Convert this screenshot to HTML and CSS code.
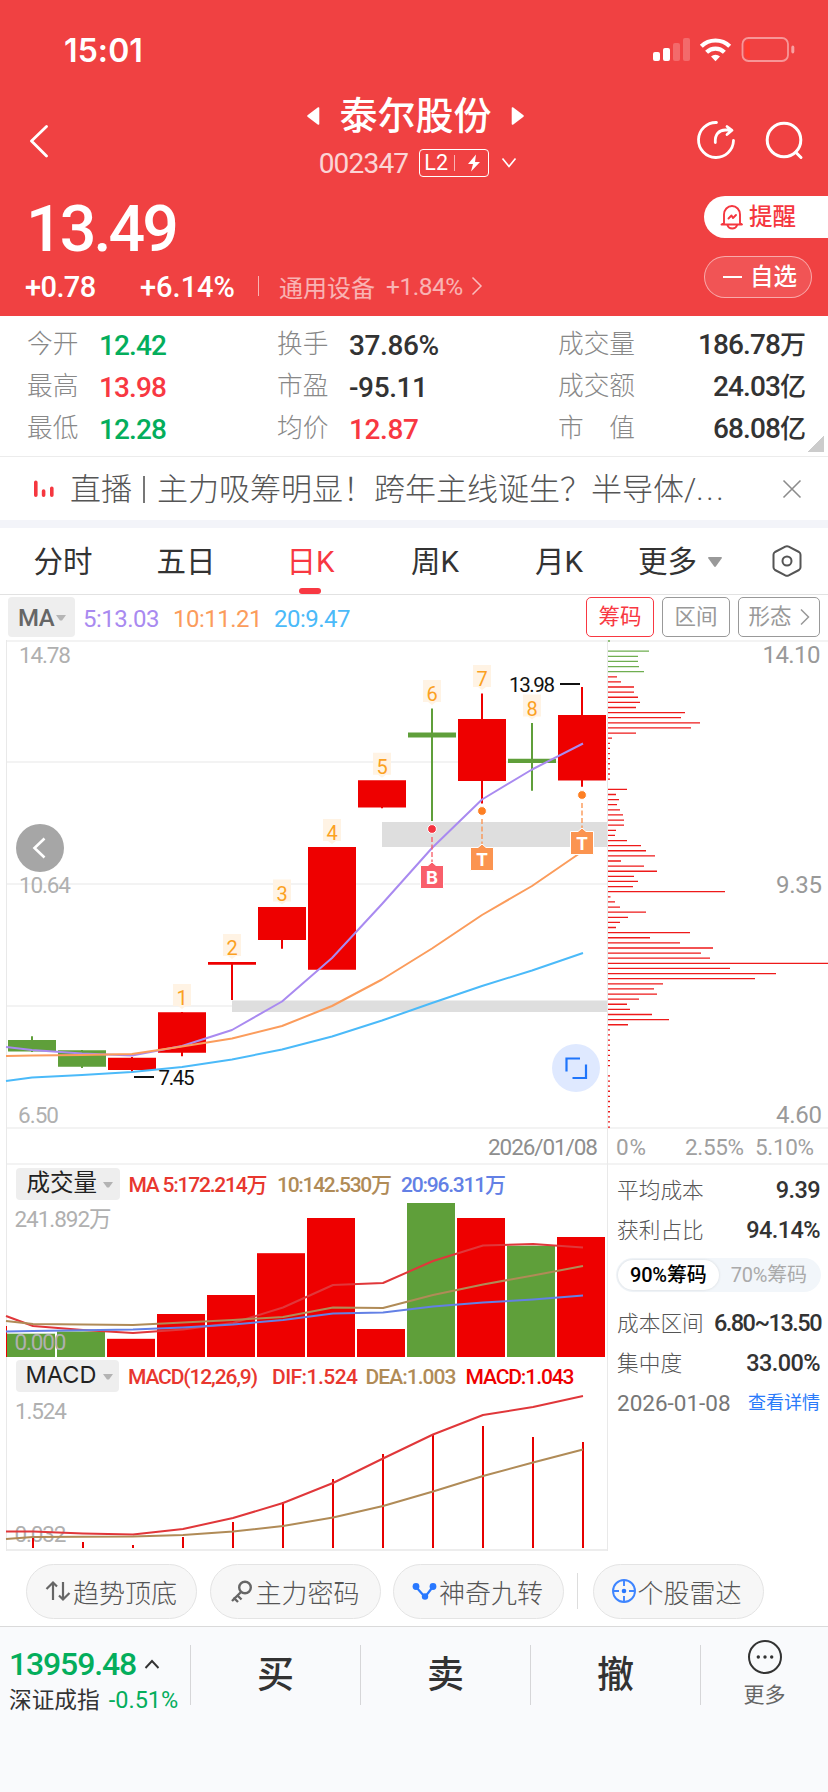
FILE: index.html
```html
<!DOCTYPE html>
<html lang="zh-CN">
<head>
<meta charset="utf-8">
<meta name="viewport" content="width=828">
<title>泰尔股份 002347</title>
<link rel="stylesheet" href="styles.css">
</head>
<body>
<div class="app">
  <header class="header">
    <div class="status">
      <span class="clock">15:01</span>
      <svg class="status-icons" width="142" height="26" viewBox="653 37 142 26">
        <g fill="#fff">
          <rect x="653" y="52" width="7" height="9" rx="2"/><rect x="663" y="48" width="7" height="13" rx="2"/>
          <rect x="673" y="43" width="7" height="18" rx="2" opacity=".22"/><rect x="683" y="38" width="7" height="23" rx="2" opacity=".22"/>
          <rect x="791.3" y="45.5" width="3" height="8" rx="2" opacity=".5"/>
          <path d="M711 56.6a6.4 6.4 0 0 1 9 0l-4.500 4.700z"/>
        </g>
        <g fill="none" stroke="#fff" stroke-width="4.200">
          <path d="M701.300 46.300a20.300 20.300 0 0 1 28.400 0M706.600 52.300a12.600 12.600 0 0 1 17.800 0"/>
        </g>
        <rect x="742.500" y="38" width="45.500" height="23" rx="6" fill="none" stroke="#fff" stroke-width="1.800" opacity=".45"/>
        <path d="M750 41v17h-2a3 3 0 0 1-3-3V44a3 3 0 0 1 3-3z" fill="#ff3b30"/>
      </svg>
    </div>

    <div class="nav">
      <svg class="back" width="18" height="34" viewBox="30 124 18 34"><path d="M46.500 126.500 31.500 141l15 15" fill="none" stroke="#fff" stroke-width="2.800" stroke-linecap="round" stroke-linejoin="round"/></svg>
      <div class="title">
        <div class="title-row">
          <svg width="13" height="20" viewBox="0 0 13 20"><path d="M11.500 2v16L1 10z" fill="#fff" stroke="#fff" stroke-width="1.600" stroke-linejoin="round"/></svg>
          <h1>泰尔股份</h1>
          <svg width="13" height="20" viewBox="0 0 13 20"><path d="M1.500 2v16L12 10z" fill="#fff" stroke="#fff" stroke-width="1.600" stroke-linejoin="round"/></svg>
        </div>
        <div class="code-row">
          <span class="code">002347</span>
          <span class="level"><b>L2</b><i></i><svg width="14" height="18" viewBox="0 0 14 18"><path d="M9 .5 1 10h5l-2 7.500L13 8H8z" fill="#fff"/></svg></span>
          <svg width="16" height="12" viewBox="0 0 16 12"><path d="m1.500 1.500 6.500 8 6.500-8" fill="none" stroke="#fff" stroke-width="1.700"/></svg>
        </div>
      </div>
      <div class="nav-actions">
        <svg width="40" height="40" viewBox="696 120 40 40" fill="none" stroke="#fff" stroke-width="2.800" stroke-linecap="round" stroke-linejoin="round"><path d="M716.500 122.500A17.500 17.500 0 1 0 733.500 140.500M715.300 142.500c-.6-8 3.700-12.500 10-12.500h6M727 126.500l5 3.800-5 4.200"/></svg>
        <svg width="40" height="40" viewBox="764 120 40 40" fill="none" stroke="#fff" stroke-width="3" stroke-linecap="round"><circle cx="784" cy="140" r="16.800"/><path d="m796.500 153 4.500 4.500"/></svg>
      </div>
    </div>

    <div class="quote">
      <div class="quote-main">
        <div class="price">13.49</div>
        <div class="changes">
          <span class="chg">+0.78</span><span class="chg pct">+6.14%</span><i class="bar"></i>
          <span class="industry">通用设备</span><span class="industry-pct">+1.84%</span>
          <svg width="12" height="20" viewBox="0 0 12 20"><path d="m1.500 1.500 8.500 8.500-8.500 8.500" fill="none" stroke="#fff" stroke-width="1.500" opacity=".65"/></svg>
        </div>
      </div>
      <div class="quote-actions">
        <button class="remind"><svg width="25" height="26" viewBox="719 203 25 26" fill="none" stroke="#f5373f" stroke-width="1.900" stroke-linejoin="round" stroke-linecap="round"><path d="M724 222v-8.500a8 8.500 0 0 1 16 0V222l2 1.500h-20.500zM727.500 224.500c1.500 4 8 4 9.500 0M728.500 217.500l3-3 1.500 2.500 3-3"/></svg>提醒</button>
        <button class="watch"><i></i>自选</button>
      </div>
    </div>
  </header>

  <section class="stats">
    <dl class="c1"><dt>今开</dt><dd class="down">12.42</dd><dt>最高</dt><dd class="up">13.98</dd><dt>最低</dt><dd class="down">12.28</dd></dl>
    <dl class="c2"><dt>换手</dt><dd>37.86%</dd><dt>市盈</dt><dd>-95.11</dd><dt>均价</dt><dd class="up">12.87</dd></dl>
    <dl class="c3"><dt>成交量</dt><dd>186.78<em>万</em></dd><dt>成交额</dt><dd>24.03<em>亿</em></dd><dt>市　值</dt><dd>68.08<em>亿</em></dd></dl>
    <i class="corner"></i>
  </section>

  <section class="news">
    <svg width="20" height="18" viewBox="0 0 20 18" stroke="#f5373f" stroke-width="3.600" stroke-linecap="round"><path d="M1.800 2.300v12.900M9.600 11v4.200M17.800 8.300v6.900"/></svg>
    <p>直播<i class="pipe"></i>主力吸筹明显！跨年主线诞生？半导体/<span class="dots">...</span></p>
    <svg class="close" width="20" height="20" viewBox="0 0 20 20"><path d="m1.500 1.500 17 17m0-17-17 17" stroke="#8c8c8c" stroke-width="1.600"/></svg>
  </section>

  <nav class="tabs">
    <a class="t1">分时</a><a class="t2">五日</a><a class="t3 active">日K</a><a class="t4">周K</a><a class="t5">月K</a>
    <a class="t6">更多<svg width="14" height="10" viewBox="0 0 14 10"><path d="M1 0h12q1.500 0 .6 1.500L8 9.300q-1 1.200-2 0L.4 1.500Q-.5 0 1 0z" fill="#999"/></svg></a>
    <svg width="30" height="32" viewBox="0 0 30 32" fill="none" stroke="#555" stroke-width="2" stroke-linejoin="round"><path d="M13.300 1.600Q15 .8 16.700 1.600L27 7q1.500 1 1.500 2.800v12.400q0 1.800-1.500 2.800l-10.300 5.400q-1.700.8-3.400 0L3 25q-1.500-1-1.500-2.800V9.800Q1.500 8 3 7z"/><circle cx="15" cy="16" r="4.500"/></svg>
  </nav>

  <section class="ma-row">
    <span class="ma-chip">MA<svg width="10" height="6" viewBox="0 0 10 6"><path d="M0 0h10L6 5.500H4z" fill="#b5b5b5"/></svg></span>
    <span class="ma purple">5:13.03</span><span class="ma orange">10:11.21</span><span class="ma blue">20:9.47</span>
    <span class="box on">筹码</span><span class="box">区间</span>
    <span class="box wide">形态<svg width="10" height="18" viewBox="0 0 10 18"><path d="m1 1.500 7.500 7.500L1 16.500" fill="none" stroke="#999" stroke-width="1.500"/></svg></span>
  </section>

  <section class="charts">
    <svg class="kline" width="608" height="912" viewBox="0 640 608 912">
      <g stroke="#f3f3f3" stroke-width="2"><path d="M6 641h602M6 762h602M6 884h602M6 1006h602M6 1128h602M6 1164h602"/><path d="M6 1550h602" stroke="#ededed"/></g>
      <path d="M6.500 640v911M607.500 640v911" stroke="#e9e9e9"/>
      <g class="axis">
        <text x="19" y="663" textLength="52">14.78</text><text x="19" y="893" textLength="52">10.64</text><text x="18" y="1123" textLength="41">6.50</text>
      </g>
      <path d="M382 822h225v25H382zM232 1000.500h375V1012H232z" fill="#dedede"/>
      <g id="candles"></g>
      <g fill="none" stroke-width="2" stroke-linejoin="round">
        <polyline stroke="#a98af0" points="6,1047 32,1050 82,1053.500 132,1055.500 182,1046 232,1030 282,1001.500 332,958 382,904 432,848 482,799.500 532,769.500 583,743.500"/>
        <polyline stroke="#fb9c5c" points="6,1056 32,1055.500 82,1055 132,1054 182,1046.500 232,1038.500 282,1026 332,1006 382,979.500 432,948.500 482,915 532,886 583,851"/>
        <polyline stroke="#4bbaf9" points="6,1081 32,1077.500 82,1075 132,1072 182,1067 232,1059.500 282,1049.500 332,1036.500 382,1020.500 432,1003 482,986 532,970.500 583,953"/>
      </g>
      <g id="tags"></g>
      <g id="signals"></g>
      <path d="M560 684h20M134 1077h20" stroke="#111" stroke-width="2"/>
      <text class="mark" x="509" y="692" textLength="46">13.98</text>
      <text class="mark" x="158.500" y="1085" textLength="36">7.45</text>
      <circle cx="40" cy="848" r="24" fill="#a6a6a6"/><path d="m44.500 838.500-10 9.500 10 9.500" fill="none" stroke="#fff" stroke-width="2.600"/>
      <circle cx="576" cy="1068" r="24" fill="#dfe9ff"/><path d="M566.500 1071.500v-13H580M586 1064.500V1078h-13.500" fill="none" stroke="#1f75fb" stroke-width="2.200"/>
      <text class="date" x="488" y="1155" textLength="110">2026/01/08</text>

      <rect x="16" y="1168" width="104" height="32" rx="4" fill="#eee"/><text class="chip-text" x="26.500" y="1191">成交量</text><path d="M103 1182h10l-4 5.500h-2z" fill="#b3b3b3"/>
      <g class="legend">
        <text x="128.500" y="1192" fill="#e8372f" textLength="139">MA 5:172.214万</text><text x="277" y="1192" fill="#b08b57" textLength="115">10:142.530万</text><text x="401" y="1192" fill="#6380e5" textLength="105">20:96.311万</text>
      </g>
      <text class="axis" x="14.500" y="1227" textLength="97">241.892万</text>
      <g id="volume"></g>
      <text class="axis" x="14.500" y="1350" textLength="52">0.000</text>
      <g fill="none" stroke-width="2" stroke-linejoin="round">
        <polyline stroke="#e0373a" points="6,1316 33,1326 83,1330 133,1333 183,1329.500 233,1323 283,1307.500 333,1285 383,1283 433,1261 483,1245.500 533,1244 583,1247.500"/>
        <polyline stroke="#b08b57" points="6,1321 33,1324 133,1325 183,1322.500 233,1320 283,1317 333,1307.500 383,1308 433,1295 483,1284.500 533,1275.500 583,1266"/>
        <polyline stroke="#6380e5" points="6,1331.500 33,1331 133,1329.500 183,1327.500 233,1324.500 283,1320 333,1313.500 383,1312.500 433,1306.500 483,1302.500 533,1299.500 583,1295.500"/>
      </g>

      <rect x="16" y="1360" width="103" height="32" rx="4" fill="#eee"/><text class="chip-text latin" x="25.500" y="1383" textLength="71">MACD</text><path d="M103 1374h10l-4 5.500h-2z" fill="#b3b3b3"/>
      <g class="legend">
        <text x="128" y="1384" fill="#e8372f" textLength="130">MACD(12,26,9)</text><text x="272" y="1384" fill="#e8372f" textLength="86">DIF:1.524</text><text x="365.500" y="1384" fill="#b08b57" textLength="91">DEA:1.003</text><text x="465.500" y="1384" fill="#ee0000" textLength="109">MACD:1.043</text>
      </g>
      <text class="axis" x="15" y="1419" textLength="52">1.524</text><text class="axis" x="14.500" y="1542" textLength="52">0.032</text>
      <path id="macd" stroke="#e60000" stroke-width="2"/>
      <g fill="none" stroke-width="2" stroke-linejoin="round">
        <polyline stroke="#e0373a" points="6,1531.500 33,1531.500 83,1533.500 133,1534.500 183,1529 233,1518 283,1503 333,1483 383,1458.500 433,1434.500 483,1415 533,1407 583,1396"/>
        <polyline stroke="#b08b57" points="6,1539 33,1537 133,1536.500 183,1535 233,1531.500 283,1526 333,1517.500 383,1506 433,1491.500 483,1476 533,1462.500 583,1449.500"/>
      </g>
    </svg>

    <aside class="chips-side">
      <svg width="220" height="525" viewBox="608 640 220 525">
        <path d="M608 641h220M608 1128h220M608 1164h220" stroke="#f3f3f3" stroke-width="2"/>
        <path id="profile-up" stroke="#6fae50" stroke-width="1.300"/>
        <path id="profile-down" stroke="#ee1a1a" stroke-width="1.300"/>
        <g class="price-axis" text-anchor="end"><text x="820.500" y="663" textLength="58">14.10</text><text x="822" y="893" textLength="46">9.35</text><text x="822" y="1123" textLength="46">4.60</text></g>
        <g class="ratio"><text x="616" y="1155" textLength="30">0%</text><text x="685" y="1155" textLength="59">2.55%</text><text x="755" y="1155" textLength="59">5.10%</text></g>
      </svg>
      <div class="facts">
        <div class="fact"><span>平均成本</span><b>9.39</b></div>
        <div class="fact"><span>获利占比</span><b>94.14%</b></div>
        <div class="switch"><span class="sel">90%筹码</span><span>70%筹码</span></div>
        <div class="fact"><span>成本区间</span><b class="range">6.80~13.50</b></div>
        <div class="fact"><span>集中度</span><b>33.00%</b></div>
        <div class="fact last"><span class="day">2026-01-08</span><a>查看详情</a></div>
      </div>
    </aside>
  </section>

  <section class="tools">
    <span class="tool"><svg width="26" height="22" viewBox="0 0 26 22" fill="none" stroke="#666" stroke-width="2.200"><path d="M8 20V3M1.500 9 8 2.500l4 4M18 2v17M14 15.500l4 4 6.500-6.500"/></svg>趋势顶底</span>
    <span class="tool t-key"><svg width="24" height="24" viewBox="0 0 24 24" fill="none" stroke="#666" stroke-width="2.400"><circle cx="15" cy="8.500" r="5.800"/><path d="M11 13 2 22M7 16l4.500 4.500M3.500 18.500 8 23"/></svg>主力密码</span>
    <span class="tool t-nine"><svg width="25" height="18" viewBox="0 0 25 18"><path d="m4 5 9 10 8.500-11" fill="none" stroke="#2878ff" stroke-width="2.200"/><g fill="#2878ff"><circle cx="4" cy="4.500" r="3.400"/><circle cx="21" cy="4.500" r="3.400"/><circle cx="13" cy="14.500" r="3.200"/></g></svg>神奇九转</span>
    <i></i>
    <span class="tool t-radar"><svg width="24" height="24" viewBox="0 0 24 24" fill="none" stroke="#3e85ff" stroke-width="1.900"><circle cx="12" cy="12" r="11"/><path d="M12 1v6M12 17v6M1 12h6M17 12h6"/><circle cx="12" cy="12" r="2.300" fill="#2878ff" stroke="none"/></svg>个股雷达</span>
  </section>

  <footer class="trade">
    <div class="index">
      <div class="index-val">13959.48<svg width="16" height="10" viewBox="0 0 16 10"><path d="m1.500 9 6.500-7 6.500 7" fill="none" stroke="#333" stroke-width="1.900"/></svg></div>
      <div class="index-name">深证成指<span>-0.51%</span></div>
    </div>
    <div class="act">买</div><div class="act">卖</div><div class="act">撤</div>
    <div class="more"><svg width="36" height="36" viewBox="0 0 36 36"><circle cx="18" cy="18" r="16" fill="none" stroke="#333" stroke-width="2"/><g fill="#333"><circle cx="11.300" cy="18" r="1.700"/><circle cx="18" cy="18" r="1.700"/><circle cx="24.700" cy="18" r="1.700"/></g></svg>更多</div>
  </footer>
</div>
<script src="chart.js"></script>
</body>
</html>
```

FILE: styles.css
```css
* { box-sizing: border-box; }
body {
  margin: 0;
  background: #fff;
  color: #333;
  font-family: Roboto, "Noto Sans CJK SC", sans-serif;
}
svg { display: block; flex: none; }
svg text { white-space: pre; }
i, em { font-style: normal; }
.app { width: 828px; height: 1792px; overflow: hidden; display: flex; flex-direction: column; }
.app > * { flex: none; }

/* header */
.header { height: 316px; background: #f04142; color: #fff; }
.status { height: 88px; padding: 37px 33px 0 64px; display: flex; justify-content: space-between; }
.clock { font: 600 32px/27px Inter, sans-serif; letter-spacing: .1px; }
.nav { height: 100px; padding: 0 24px 0 30px; display: grid; grid-template-columns: 110px 1fr 108px; }
.back { margin-top: 36px; }
.title { display: flex; flex-direction: column; align-items: center; padding-right: 5px; }
.title-row { display: flex; align-items: center; gap: 19px; height: 55px; }
.title h1 { margin: 0; font-size: 38px; font-weight: 500; line-height: 54px; padding-top: 1px; }
.code-row { display: flex; align-items: center; height: 40px; padding-left: 5px; }
.code { font-size: 28px; letter-spacing: -.8px; opacity: .78; }
.level { width: 70px; height: 28px; margin: 0 12px 0 11px; border: 1px solid #fff; border-radius: 4px; display: flex; align-items: center; padding-left: 4px; }
.level b { font-size: 21.500px; font-weight: 400; line-height: 26px; width: 30px; letter-spacing: .2px; }
.level i { width: 1px; height: 16px; background: #fff; opacity: .6; margin-right: 12px; }
.nav-actions { display: flex; gap: 28px; padding-top: 32px; }
.quote { display: flex; justify-content: space-between; }
.quote-main { padding-left: 25px; }
.price { height: 76px; font-size: 64.500px; font-weight: 500; line-height: 82px; letter-spacing: -2.900px; margin-left: 1px; }
.changes { display: flex; align-items: center; height: 44px; }
.chg { font-size: 29px; font-weight: 500; letter-spacing: -.6px; width: 115px; padding-top: 2px; }
.chg.pct { width: 118px; letter-spacing: 0; }
.bar { width: 1px; height: 20px; background: #fff; opacity: .6; margin-right: 20px; }
.industry { font-size: 24px; opacity: .6; width: 107px; }
.industry-pct { font-size: 24.500px; opacity: .6; width: 85px; letter-spacing: -.5px; }
.quote-actions { width: 124px; padding-top: 8px; }
.quote-actions button { font: 500 23.500px/40px Roboto, "Noto Sans CJK SC", sans-serif; display: flex; align-items: center; height: 42px; padding: 0; }
.remind { width: 124px; gap: 5px; border: 0; border-radius: 21px 0 0 21px; background: #fff; color: #f5373f; }
.quote-actions .remind { padding-left: 15px; }
.watch { width: 108px; margin-top: 18px; border: 1px solid rgba(255,255,255,.5); border-radius: 21px; background: rgba(255,255,255,.1); color: #fff; }
.watch i { width: 19px; height: 2px; background: #fff; margin: 0 8px 0 18px; }

/* key figures */
.stats { height: 141px; border-bottom: 1px solid #ececec; position: relative; display: grid; grid-template-columns: 250px 281px 248px; padding: 7px 0 0 27px; }
.stats dl { margin: 0; display: grid; grid-template-columns: 72px 1fr; grid-auto-rows: 42px; line-height: 42px; }
.stats .c3 { grid-template-columns: 90px 1fr; }
.stats dt { font-size: 25.700px; font-weight: 300; color: #888; white-space: nowrap; }
.stats dd { margin: 0; font-size: 28px; font-weight: 500; letter-spacing: -.9px; padding-top: 2px; }
.stats .c2 dd { letter-spacing: -.4px; }
.stats em { font-size: 26px; letter-spacing: 0; }
.stats .c3 dd { text-align: right; padding-top: 1px; }
.stats .up { color: #f83842; }
.down { color: #04ae5c; }
.corner { position: absolute; right: 4px; bottom: 4px; width: 16px; height: 16px; background: linear-gradient(135deg, transparent 50%, #ccc 50%); }

/* news */
.news { height: 71px; border-bottom: 8px solid #f3f4f9; display: flex; align-items: center; padding: 0 26px 0 34px; color: #555; }
.news p { margin: 0 0 0 16px; flex: 1; font-size: 31px; font-weight: 300; line-height: 63px; white-space: nowrap; display: flex; align-items: center; padding-top: 2px; }
.pipe { width: 2px; height: 27px; background: #777; margin: 0 12px 0 11px; }
.dots { letter-spacing: 2.600px; }

/* period tabs */
.tabs { height: 67px; border-bottom: 1px solid #e2e2e2; display: grid; grid-template-columns: 124px 124px 125px 124px 124px 151px 30px; align-items: center; text-align: center; font-size: 29.500px; color: #333; line-height: 66px; }
.tabs a { padding-top: 1px; height: 66px; }
.tabs .t1 { padding-left: 2px; }
.tabs .t3 { position: relative; color: #f83842; }
.t3::after { content: ""; position: absolute; left: 51px; bottom: 0; width: 22px; height: 6px; border-radius: 3px; background: #f83842; }
.tabs .t6 { display: flex; align-items: center; gap: 11px; padding-left: 17px; }

/* moving averages */
.ma-row { height: 45px; display: flex; align-items: center; padding: 0 8px 1px; font-weight: 500; }
.ma-chip { width: 67px; height: 40px; border-radius: 4px; background: #eee; color: #666; font-size: 24px; display: flex; align-items: center; gap: 2px; padding: 2px 0 0 10px; letter-spacing: -.5px; }
.ma { font-size: 24px; font-weight: 400; letter-spacing: -.5px; margin-left: 8px; padding-top: 3px; width: 82px; white-space: nowrap; }
.ma + .ma { width: 93px; }
.ma + .ma + .ma { width: 85px; }
.purple { color: #a98af0; }
.orange { color: #fb9c5c; }
.blue { color: #4bbaf9; }
.box { width: 68px; height: 40px; margin-right: 8px; border: 1px solid #999; border-radius: 5px; color: #999; font-size: 21.500px; font-weight: 400; line-height: 36px; padding-bottom: 1px; display: flex; align-items: center; justify-content: center; }
.box.on { border-color: #f83842; color: #f83842; margin-left: auto; }
.box.wide { width: 82px; margin-right: 0; gap: 8px; }

/* charts */
.charts { height: 912px; display: grid; grid-template-columns: 608px 220px; }
.axis { font-size: 22.500px; fill: #b0b0b0; font-weight: 400; }
.mark { font-size: 20.500px; fill: #111; }
.date { font-size: 22.500px; fill: #8e8e8e; font-weight: 400; }
.chip-text { font-size: 23.500px; fill: #222; }
.latin { font-family: Inter, sans-serif; }
.legend { font-size: 21px; font-weight: 500; }
.tag { font-size: 20px; fill: #fba11f; text-anchor: middle; }
.signal { font: 700 18px Inter, sans-serif; fill: #fff; text-anchor: middle; }
.price-axis { font-size: 24px; fill: #999; font-weight: 400; }
.ratio { font-size: 22.500px; fill: #a0a0a0; }
.facts { padding: 3px 8px 0 9px; }
.fact { height: 40px; display: flex; align-items: center; justify-content: space-between; font-size: 21.700px; font-weight: 300; color: #555; white-space: nowrap; }
.fact b { font-size: 23.500px; font-weight: 500; color: #333; letter-spacing: -.6px; padding-top: 3px; }
.fact .range { letter-spacing: -1.500px; margin-right: -1px; }
.switch { height: 34px; margin: 10px -1px 9px; border-radius: 17px; background: #f2f6fa; display: flex; padding: 2px; font-size: 20px; font-weight: 400; line-height: 31px; color: #aaa; text-align: center; letter-spacing: -.2px; }
.switch span { flex: 1; }
.switch .sel { border-radius: 15px; background: #fff; color: #000; font-weight: 500; box-shadow: 0 0 3px rgba(0,0,0,.12); }
.fact .day { font-size: 22.500px; font-weight: 400; color: #777; letter-spacing: 0; padding-top: 3px; }
.fact a { font-size: 18px; font-weight: 400; color: #2a7bfa; }

/* tool chips */
.tools { height: 74px; display: flex; align-items: center; padding: 4px 0 0 26px; }
.tool { width: 171px; height: 55px; margin-right: 12.500px; border: 1px solid #e4e4e4; border-radius: 28px; background: #f7f7f7; display: flex; align-items: center; gap: 2px; padding-left: 18px; font-size: 26px; font-weight: 300; color: #555; }
.t-key { padding-left: 19px; }
.tools i { width: 1px; height: 36px; background: #ddd; margin-right: 15px; }

/* trade bar */
.trade { height: 166px; border-top: 1px solid #dadada; background: #f9fafc; display: grid; grid-template-columns: 190px 170px 170px 170px 128px; }
.index { padding: 16px 0 0 9px; }
.index-val { display: flex; align-items: center; gap: 8px; font-size: 32px; font-weight: 500; line-height: 42px; color: #04ae5c; letter-spacing: -1.150px; }
.index-name { font-size: 22.700px; line-height: 30px; white-space: nowrap; }
.index-name span { color: #04ae5c; font-size: 23.500px; margin-left: 9px; letter-spacing: 0; }
.act { height: 60px; margin-top: 18px; border-left: 1px solid #d6d6d8; font-size: 37px; font-weight: 500; line-height: 62px; text-align: center; }
.more { height: 60px; margin-top: 18px; border-left: 1px solid #d6d6d8; display: flex; flex-direction: column; align-items: center; font-size: 21px; line-height: 32px; color: #666; gap: 4px; }
.more svg { margin-top: -6px; }
```

FILE: chart.js
```js
const RED = '#ee0000';
const GREEN = '#5f9f3a';
const byId = id => document.getElementById(id);

// [color, bodyTop, bodyBottom, wickTop, wickBottom]
const candles = [
  [GREEN, 1040, 1051.5, 1036.3, 1052], [GREEN, 1050.3, 1066.7, 1050, 1068],
  [RED, 1057.7, 1070, 1057, 1071.7], [RED, 1012.3, 1052.8, 1012, 1056.3],
  [RED, 962, 964.8, 962, 1000], [RED, 907, 940, 907, 948.7],
  [RED, 847, 969.8, 847, 969], [RED, 780.2, 807.6, 781, 808.3],
  [GREEN, 732.5, 737.6, 708.5, 821], [RED, 719, 781, 693.5, 803.5],
  [GREEN, 758.8, 763.1, 723, 790.7], [RED, 715, 780.5, 687, 786.8]
];
byId('candles').innerHTML = candles.map(([c, t, b, wt, wb], i) => {
  const x = 32 + 50 * i;
  return `<path d="M${x - 24} ${t}h48V${b}h-48zM${x - 1} ${wt}h2V${wb}h-2z" fill="${c}"/>`;
}).join('');

// nine-turn counters above candles 3..10
const tagTops = [984, 934, 879.5, 819, 752.7, 680, 665, 694.5];
byId('tags').innerHTML = tagTops.map((y, i) => {
  const x = 182 + 50 * i;
  return `<path d="M${x - 9} ${y}h18v22h-5l-4 3-4-3h-5z" fill="#fff3e4"/><text class="tag" x="${x}" y="${y + 21}">${i + 1}</text>`;
}).join('');

const signals = [
  ['B', 432, 829, 866, '#f5333f', '#f95f6b'],
  ['T', 482, 811, 848, '#fd7f23', '#fb9450'],
  ['T', 582, 795, 832, '#fd7f23', '#fb9450']
];
byId('signals').innerHTML = signals.map(([s, x, dot, y, c, fill]) =>
  `<path d="M${x} ${dot + 8}V${y - 4}" stroke="${fill}" stroke-width="1.8" stroke-dasharray="5 2.5" opacity=".75"/>
   <circle cx="${x}" cy="${dot}" r="4.4" fill="${c}" stroke="#fff" stroke-width="1"/>
   <path d="M${x - 11.5} ${y - .5}h7.5l4-3.500 4 3.500h7.500v23h-23z" fill="${fill}" stroke="#fff" stroke-width="1"/>
   <text class="signal" x="${x}" y="${y + 17.5}">${s}</text>`).join('');

const volume = [1333.7, 1331.5, 1338.8, 1314, 1295, 1253.2, 1218, 1329, 1203, 1218, 1245.7, 1237];
byId('volume').innerHTML = `<rect x="6" y="1326" width="1" height="31" fill="${RED}"/>` + volume.map((y, i) =>
  `<rect x="${7 + 50 * i}" y="${y}" width="48" height="${1357 - y}" fill="${[0, 1, 8, 10].includes(i) ? GREEN : RED}"/>`).join('');

const macd = [1536, 1542, 1545, 1537, 1522, 1502, 1479, 1454, 1435, 1426, 1437, 1442];
byId('macd').setAttribute('d', macd.map((y, i) => `M${33 + 50 * i} ${y}V1548`).join(''));

// chip distribution, one bar per price step
const up = [41, 30, 30, 31, 36];
const down = [9, 13, 26, 26, 30, 32, 28, 77, 73, 92, 83, 28, 4, 2, 2, 2, 2, 2, 2, 2, 2, 0,
  19, 8, 11, 9, 12, 15, 16, 16, 8, 7, 19, 33, 38, 47, 13, 36, 49, 26, 30, 25, 117, 2.5, 7, 12, 38, 20, 12, 8,
  82, 42, 72, 105, 93, 102, 220, 122, 168, 147, 55, 46, 49, 31, 19, 22, 44, 61, 20,
  2, 2, 2, 2, 2, 2, 2, 2, 0, 2, 2, 2, 2, 2, 2, 2, 2, 2, 2, 2];
const bars = (list, start) => list.map((w, i) => w ? `M608 ${(651.2 + 5.117 * (i + start)).toFixed(2)}h${w}` : '').join('');
byId('profile-up').setAttribute('d', 'M608 641h2' + bars(up, 0));
byId('profile-down').setAttribute('d', bars(down, 5));
```
